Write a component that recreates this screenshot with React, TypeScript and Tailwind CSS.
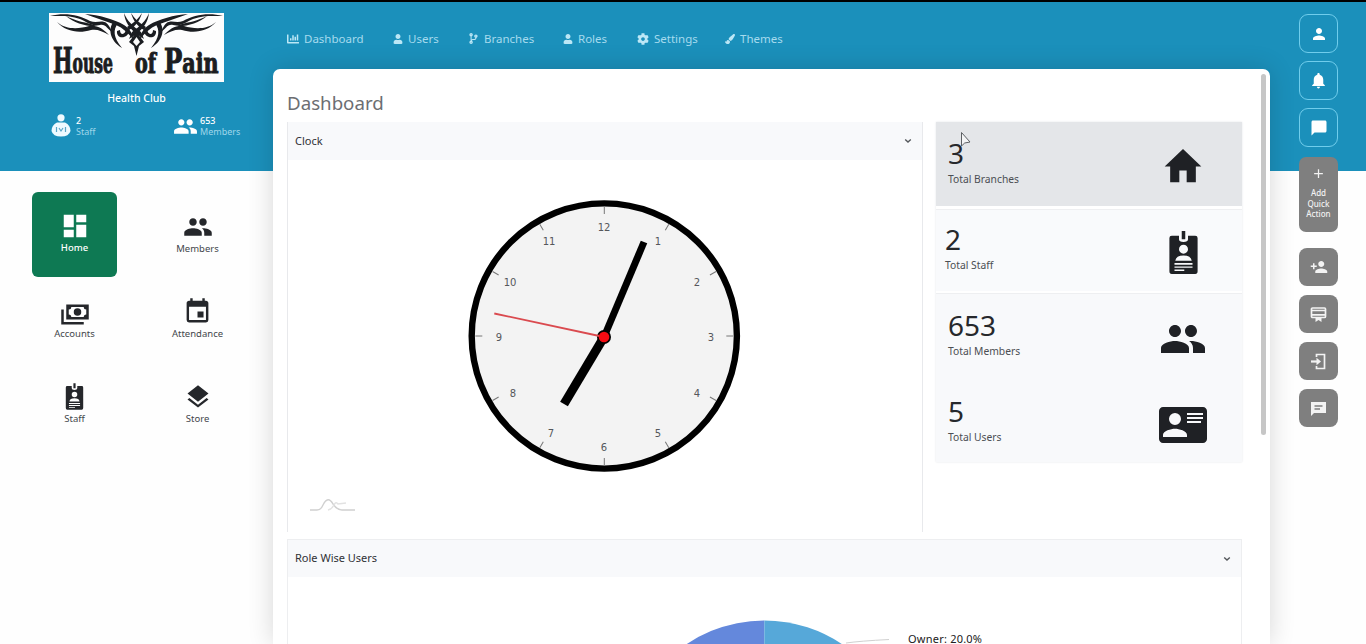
import type { ReactNode } from "react";
import {
  MdPerson,
  MdPeople,
  MdNotifications,
  MdChatBubble,
  MdAdd,
  MdPersonAdd,
  MdLayers,
  MdDashboard,
  MdHome,
} from "react-icons/md";
import { FaChartBar, FaUser, FaCodeBranch, FaCog, FaPaintBrush } from "react-icons/fa";

const paths = {
  cash: "M5,6H23V18H5V6M14,9A3,3 0 0,1 17,12A3,3 0 0,1 14,15A3,3 0 0,1 11,12A3,3 0 0,1 14,9M9,8A2,2 0 0,1 7,10V14A2,2 0 0,1 9,16H19A2,2 0 0,1 21,14V10A2,2 0 0,1 19,8H9M1,10H3V20H19V22H1V10Z",
  calendar:
    "M19,19H5V8H19M16,1V3H8V1H6V3H5C3.89,3 3,3.89 3,5V19A2,2 0 0,0 5,21H19A2,2 0 0,0 21,19V5C21,3.89 20.1,3 19,3H18V1M17,12H12V17H17V12Z",
  card: "M2,3H22C23.05,3 24,3.95 24,5V19C24,20.05 23.05,21 22,21H2C0.95,21 0,20.05 0,19V5C0,3.95 0.95,3 2,3M14,6V7H22V6H14M14,8V9H22V8H14M14,10V11H21V10H14M8,13.91C6,13.91 2,15 2,17V18H14V17C14,15 10,13.91 8,13.91M8,6A3,3 0 0,0 5,9A3,3 0 0,0 8,12A3,3 0 0,0 11,9A3,3 0 0,0 8,6Z",
  badge:
    "M11.1 1H12.9V5.2H11.1ZM6 3.4H9.7V5.2Q9.7 6.6 12 6.6T14.3 5.2V3.4H18Q19.2 3.4 19.2 4.6V21.6Q19.2 23 18 23H6Q4.8 23 4.8 21.6V4.6Q4.8 3.4 6 3.4ZM12 8A2.3 2.3 0 1 0 12 12.6A2.3 2.3 0 1 0 12 8ZM7.8 16.2H16.2Q15.8 13.5 12 13.5T7.8 16.2ZM7.4 17.4V18.2H16.6V17.4ZM7.4 19.1V19.8H16.6V19.1ZM7.4 20.7V21.4H12.4V20.7Z",
};

function Glyph({ d, size }: { d: string; size: number }) {
  return (
    <svg viewBox="0 0 24 24" width={size} height={size} fill="currentColor" fillRule="evenodd">
      <path d={d} />
    </svg>
  );
}

function Logo() {
  const wing = (
    <g fill="#1b1d21">
      <path d="M1 3C16 -1 30 2 41 8C49 11 55 5 60 13L64 20C58 16 57 11 51 12C44 14 38 9 31 6C20 2 11 3 1 3Z" />
      <path d="M8 9C17 17 30 16 40 13C49 12 54 16 60 22C53 18 48 16 42 17C29 21 16 18 8 9Z" />
      <path d="M17 3C27 8 34 9 42 11L48 13C38 14 25 10 17 3Z" />
      <path d="M36 1C50 2 65 6 75 12C81 16 84 21 84 26C79 20 74 15 67 12C57 8 46 5 36 1Z" />
      <path d="M65 8C59 15 60 27 73 35C64 24 64 17 69 10Z" />
      <path d="M68 18C67 27 80 26 80 17L77 15C77 22 71 23 71 17Z" />
      <path d="M75 0C78 8 84 13 92 19L95 26L89 22C80 15 76 9 75 0Z" />
      <path d="M82 0C85 5 90 10 97 14L95 17C88 13 84 7 82 0Z" />
    </g>
  );
  return (
    <svg className="block" width="175" height="69" viewBox="0 0 175 69">
      <rect width="175" height="69" fill="#fdfdfd" />
      {wing}
      <g transform="matrix(-1 0 0 1 175 0)">{wing}</g>
      <path
        d="M87.5 19L95 29L90 33L87.5 43L85 33L80 29ZM87.5 24L84 29L87.5 33L91 29Z"
        fill="#1b1d21"
        fillRule="evenodd"
      />
      <g
        fill="#1b1d21"
        stroke="#1b1d21"
        strokeWidth="1"
        fontFamily="'DejaVu Serif Condensed','DejaVu Serif',serif"
        fontWeight="700"
      >
        <text transform="translate(4 60) scale(0.64 1)">
          <tspan fontSize="36">H</tspan>
          <tspan fontSize="27">ouse</tspan>
        </text>
        <text transform="translate(86 60) scale(0.76 1)" fontSize="28">of</text>
        <text transform="translate(115 60) scale(0.82 1)">
          <tspan fontSize="33">P</tspan>
          <tspan fontSize="28">ain</tspan>
        </text>
      </g>
    </svg>
  );
}

function StaffIcon() {
  return (
    <svg width="20" height="23" viewBox="0 0 20 23" fill="#eefaff">
      <circle cx="10" cy="3.8" r="3.6" />
      <path d="M6 8.5H14Q19.5 11 19.5 17Q18 22.5 10 22.5T.5 17Q.5 11 6 8.5Z" />
      <path d="M5.5 13V18M14.5 13V18M8 14L10 17L12 14" stroke="#5aa6c7" strokeWidth="1.2" fill="none" />
    </svg>
  );
}

const nav = [
  { label: "Dashboard", icon: <FaChartBar size={12} />, box: "w-[106px]", text: "w-[62px]" },
  { label: "Users", icon: <FaUser size={10} />, box: "w-[75px]", text: "w-[32px]" },
  { label: "Branches", icon: <FaCodeBranch size={11} />, box: "w-[95px]", text: "w-[52px]" },
  { label: "Roles", icon: <FaUser size={10} />, box: "w-[74px]", text: "w-[32px]" },
  { label: "Settings", icon: <FaCog size={12} />, box: "w-[88px]", text: "w-[44px]" },
  { label: "Themes", icon: <FaPaintBrush size={10} />, box: "w-[80px]", text: "w-[44px]" },
];

function Sidebar() {
  const items: { label: string; icon: ReactNode }[] = [
    { label: "Home", icon: <MdDashboard size={30} /> },
    { label: "Members", icon: <MdPeople size={30} /> },
    { label: "Accounts", icon: <Glyph d={paths.cash} size={30} /> },
    { label: "Attendance", icon: <Glyph d={paths.calendar} size={29} /> },
    { label: "Staff", icon: <Glyph d={paths.badge} size={29} /> },
    { label: "Store", icon: <MdLayers size={28} /> },
  ];
  return (
    <aside className="flex w-[273px] shrink-0 flex-col">
      <div className="h-[169px] pt-[11px] text-white">
        <div className="ml-[49px] w-[175px]">
          <Logo />
          <p className="mt-[8px] text-center text-[10.5px] leading-4 font-medium">Health Club</p>
        </div>
        <div className="mt-[8px] flex h-7 pl-[51px]">
          <div className="flex w-[122px] gap-[5px]">
            <StaffIcon />
            <div className="pt-px text-[9px] leading-[11px]">
              <p className="font-medium">2</p>
              <p className="text-[#9fd6ea]">Staff</p>
            </div>
          </div>
          <div className="flex gap-[2px]">
            <MdPeople size={25} />
            <div className="pt-px text-[9px] leading-[11px]">
              <p className="font-medium">653</p>
              <p className="text-[#9fd6ea]">Members</p>
            </div>
          </div>
        </div>
      </div>
      <nav className="mt-[21px] ml-[32px] grid grid-cols-[85px_85px] gap-x-[38px] text-[#25272b]">
        {items.map((it, i) => (
          <div
            key={it.label}
            className={
              i === 0
                ? "flex h-[85px] flex-col items-center rounded-[6px] bg-[#0e7953] pt-[18px] text-white"
                : "flex h-[85px] flex-col items-center pt-[19px]"
            }
          >
            <div className="flex h-[31px] items-center">{it.icon}</div>
            <span className={i === 0 ? "text-[9.5px] leading-[13px] font-medium" : "text-[9.5px] leading-[13px] text-[#43464b]"}>
              {it.label}
            </span>
          </div>
        ))}
      </nav>
    </aside>
  );
}

function Clock() {
  const numerals = [
    ["12", 604, 227], ["1", 658, 241], ["2", 697, 282], ["3", 711, 337], ["4", 697, 393], ["5", 658, 433],
    ["6", 604, 447], ["7", 551, 433], ["8", 513, 393], ["9", 499, 337], ["10", 510, 282], ["11", 549, 241],
  ] as const;
  return (
    <svg width="274" height="274" viewBox="467 199 274 274" className="block">
      <circle cx="604.3" cy="336" r="132.6" fill="#f3f3f3" stroke="#000" strokeWidth="6.4" />
      {numerals.map((_, i) => (
        <path key={i} d="M604.3 207V214" stroke="#777" strokeWidth="1" transform={`rotate(${i * 30} 604.3 336)`} />
      ))}
      <g fill="#55575b" fontSize="10" fontFamily="'DejaVu Sans',sans-serif" textAnchor="middle">
        {numerals.map(([t, x, y]) => (
          <text key={t} x={x} y={y + 3.6}>{t}</text>
        ))}
      </g>
      <path d="M604 337L644 242" stroke="#000" strokeWidth="7" />
      <path d="M604 337L564 404" stroke="#000" strokeWidth="9" />
      <circle cx="604" cy="337" r="7" fill="#000" />
      <path d="M604 337L494.3 313.5" stroke="#da4a4f" strokeWidth="1.8" />
      <circle cx="604" cy="337" r="5.3" fill="#f40b12" />
    </svg>
  );
}

function Caret() {
  return (
    <svg width="8" height="6" viewBox="0 0 8 6" fill="none" stroke="#55585c" strokeWidth="1.4">
      <path d="M1.2 1.5L4 4.1L6.8 1.5" />
    </svg>
  );
}

function PanelHead({ title, height }: { title: string; height: string }) {
  return (
    <div className={`flex items-center justify-between bg-[#f8f9fb] pr-[10px] pl-[7px] ${height}`}>
      <span className="text-[11px] text-[#303236]">{title}</span>
      <Caret />
    </div>
  );
}

const stats = [
  { n: "3", label: "Total Branches", icon: <MdHome size={44} className="h-[47px]" preserveAspectRatio="none" />, row: "h-[84px] bg-[#e4e6e9] pl-3 pt-[15px]" },
  { n: "2", label: "Total Staff", icon: <Glyph d={paths.badge} size={47} />, row: "h-[82px] mt-[3px] border-t border-[#eeeff1] bg-[#f9fafc] pl-[9px] pt-[13px]" },
  { n: "653", label: "Total Members", icon: <MdPeople size={48} />, row: "h-[85px] mt-[2px] border-t border-[#eeeff1] bg-[#f8f9fb] pl-3 pt-[15px]" },
  { n: "5", label: "Total Users", icon: <Glyph d={paths.card} size={48} />, row: "h-[84px] bg-[#f8f9fb] pl-3 pt-[17px]" },
];

function Main() {
  return (
    <main className="flex w-[997px] shrink-0 flex-col">
      <div className="flex h-[67px] items-center pt-[6px] pl-[14px] text-[11.5px] text-[#a6dbee]">
        {nav.map((n) => (
          <div key={n.label} className={`flex shrink-0 items-center gap-[5px] ${n.box}`}>
            <span className="text-[#bce7f6]">{n.icon}</span>
            <span className={n.text}>{n.label}</span>
          </div>
        ))}
      </div>
      <section className="flex h-[575px] rounded-t-[7px] bg-white pr-[4px] pl-[14px] shadow-[0_0_26px_rgba(0,0,0,0.16)]">
        <div className="w-[955px] shrink-0">
          <h1 className="h-[53px] pt-[19px] text-[18.7px] leading-[30px] text-[#6c6e72]">Dashboard</h1>
          <div className="flex items-start gap-[13px]">
            <div className="h-[410px] w-[636px] border border-t-0 border-b-0 border-[#e8e9ec]">
              <PanelHead title="Clock" height="h-[38px]" />
              <div className="pt-[39px] pl-[179px]">
                <Clock />
              </div>
              <svg className="mt-[23px] ml-[21px]" width="47" height="17" viewBox="0 0 47 17" fill="none" stroke="#d0d0d0" strokeWidth="1.4">
                <path d="M1 14H8Q12 14 14 9Q19-1 24 8Q28 14 33 14H46" />
                <path d="M19 14Q23 13 25 9T29 8L37 7" stroke="#e2e2e2" />
              </svg>
            </div>
            <div className="h-[340px] w-[306px] bg-white shadow-[0_0_2px_#e3e5e8]">
              {stats.map((s) => (
                <div key={s.label} className={`flex justify-between pr-[34px] ${s.row}`}>
                  <div>
                    <p className="text-[28px] leading-[33px] text-[#26282c]">{s.n}</p>
                    <p className="pt-px text-[10.3px] leading-[17px] text-[#4b4e53]">{s.label}</p>
                  </div>
                  <div className="flex h-[59px] w-[50px] items-center justify-center text-[#1f2125]">{s.icon}</div>
                </div>
              ))}
            </div>
          </div>
          <div className="mt-[7px] h-[105px] overflow-hidden border border-b-0 border-[#edeef0]">
            <PanelHead title="Role Wise Users" height="h-[37px]" />
            <svg className="block" width="953" height="67" viewBox="288 577 953 67">
              <path d="M764.3 760V620.5A139.5 139.5 0 0 0 764.3 899.5Z" fill="#6488dc" />
              <path d="M764.3 760V620.5A139.5 139.5 0 0 1 897 717Z" fill="#56a8d9" />
              <path d="M846 643Q860 641 889 639.5" stroke="#d0d0d0" strokeWidth="1" fill="none" />
              <text x="908" y="643" fontSize="11" fill="#202020" textLength="74" fontFamily="'Noto Sans',sans-serif">Owner: 20.0%</text>
            </svg>
          </div>
        </div>
        <div className="mt-[5px] ml-auto h-[361px] w-[5px] rounded-full bg-[#c6c6c6]" />
      </section>
    </main>
  );
}

function ActionIcon({ kind }: { kind: "card" | "login" | "note" }) {
  return (
    <svg width="17" height="17" viewBox="0 0 17 17" fill="none" stroke="#f3f3f3" strokeWidth="1.7">
      {kind === "card" && (
        <>
          <rect x="1.5" y="2" width="14" height="9.5" rx="1" />
          <path d="M2 4.5H15M2 8.8H15" />
          <path d="M5.5 11H11.5V16L8.5 14L5.5 16Z" fill="#f3f3f3" stroke="none" />
        </>
      )}
      {kind === "login" && (
        <>
          <path d="M6.5 4V1.5H14.5V15.5H6.5V13" />
          <path d="M1 8.5H8" strokeWidth="2.2" />
          <path d="M6.5 4.8L11 8.5L6.5 12.2Z" fill="#f3f3f3" stroke="none" />
        </>
      )}
      {kind === "note" && (
        <>
          <path d="M1 2H16V13H4L1 16Z" fill="#f3f3f3" stroke="none" />
          <path d="M4.5 6H12.5M4.5 9H10" stroke="#7f7f7f" strokeWidth="1.3" />
        </>
      )}
    </svg>
  );
}

function Rail() {
  return (
    <aside className="flex flex-col pt-[12px] pl-[29px]">
      <div className="flex flex-col gap-2">
        {[<MdPerson key="p" size={18} />, <MdNotifications key="n" size={19} />, <MdChatBubble key="c" size={18} />].map((ic, i) => (
          <button key={i} className="flex h-[39px] w-[39px] items-center justify-center rounded-[9px] border-[1.5px] border-[#70cdec] text-white">
            {ic}
          </button>
        ))}
      </div>
      <button className="mt-[10px] flex h-[75px] w-[39px] flex-col items-center rounded-[7px] bg-[#7f7f7f] pt-[9px] text-[8px] leading-[10.5px] font-medium text-[#f2f2f2]">
        <MdAdd size={15} />
        <span className="mt-[7px]">Add</span>
        <span>Quick</span>
        <span>Action</span>
      </button>
      <div className="mt-[16px] flex flex-col gap-[9px] text-[#f3f3f3]">
        {[
          <MdPersonAdd key="a" size={18} />,
          <ActionIcon key="b" kind="card" />,
          <ActionIcon key="c" kind="login" />,
          <ActionIcon key="d" kind="note" />,
        ].map((ic, i) => (
          <button key={i} className="flex h-[38px] w-[39px] items-center justify-center rounded-[8px] bg-[#7f7f7f]">
            {ic}
          </button>
        ))}
      </div>
    </aside>
  );
}

export default function App() {
  return (
    <div className="relative h-[644px] w-[1366px] overflow-hidden border-t-2 border-black bg-[linear-gradient(to_bottom,#1b90bb_169px,#fefefe_169px)] font-['Noto_Sans',sans-serif]">
      <div className="flex h-full">
        <Sidebar />
        <Main />
        <Rail />
      </div>
      <svg className="absolute top-[129px] left-[960px]" width="13" height="18" viewBox="0 0 13 18" fill="#f4f5f6" stroke="#5d6064" strokeWidth="1">
        <path d="M1.5 1.5V15L4.7 12L10 11Z" />
      </svg>
    </div>
  );
}
